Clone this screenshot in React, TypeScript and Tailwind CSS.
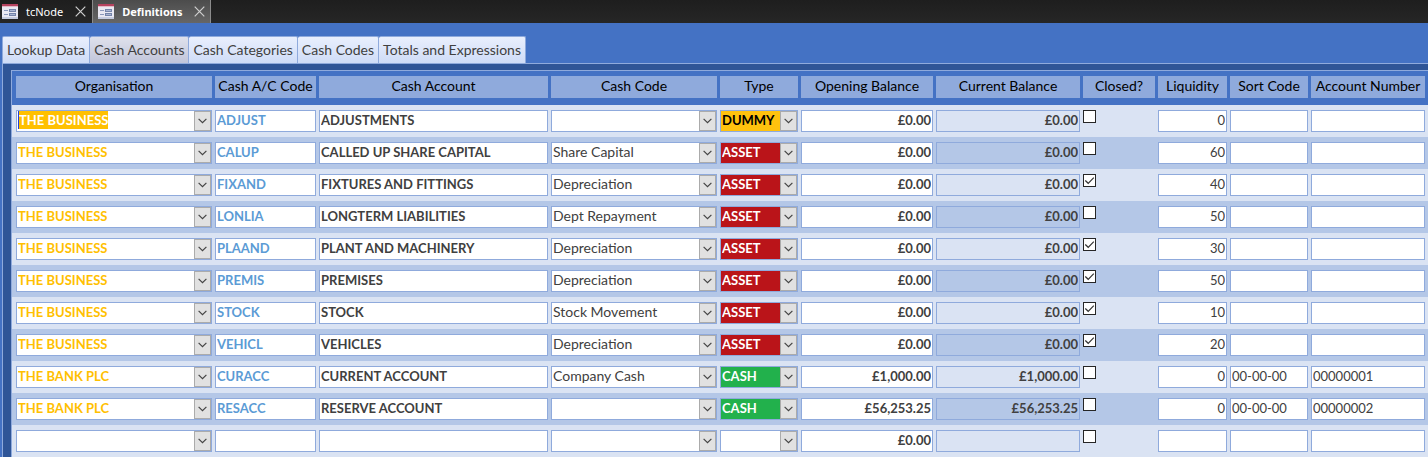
import { useState } from "react";

type AccountType = "DUMMY" | "ASSET" | "CASH" | "";

interface Account {
  organisation: string;
  code: string;
  name: string;
  cashCode: string;
  type: AccountType;
  opening: string;
  current: string;
  closed: boolean;
  liquidity: string;
  sortCode: string;
  accountNumber: string;
}

const asset = (code: string, name: string, cashCode: string, closed: boolean, liquidity: string): Account => ({
  organisation: "THE BUSINESS",
  code,
  name,
  cashCode,
  type: "ASSET",
  opening: "£0.00",
  current: "£0.00",
  closed,
  liquidity,
  sortCode: "",
  accountNumber: "",
});

const accounts: Account[] = [
  { ...asset("ADJUST", "ADJUSTMENTS", "", false, "0"), type: "DUMMY" },
  asset("CALUP", "CALLED UP SHARE CAPITAL", "Share Capital", false, "60"),
  asset("FIXAND", "FIXTURES AND FITTINGS", "Depreciation", true, "40"),
  asset("LONLIA", "LONGTERM LIABILITIES", "Dept Repayment", false, "50"),
  asset("PLAAND", "PLANT AND MACHINERY", "Depreciation", true, "30"),
  asset("PREMIS", "PREMISES", "Depreciation", true, "50"),
  asset("STOCK", "STOCK", "Stock Movement", true, "10"),
  asset("VEHICL", "VEHICLES", "Depreciation", true, "20"),
  {
    organisation: "THE BANK PLC", code: "CURACC", name: "CURRENT ACCOUNT", cashCode: "Company Cash", type: "CASH",
    opening: "£1,000.00", current: "£1,000.00", closed: false, liquidity: "0", sortCode: "00-00-00", accountNumber: "00000001",
  },
  {
    organisation: "THE BANK PLC", code: "RESACC", name: "RESERVE ACCOUNT", cashCode: "", type: "CASH",
    opening: "£56,253.25", current: "£56,253.25", closed: false, liquidity: "0", sortCode: "00-00-00", accountNumber: "00000002",
  },
  {
    organisation: "", code: "", name: "", cashCode: "", type: "",
    opening: "£0.00", current: "", closed: false, liquidity: "", sortCode: "", accountNumber: "",
  },
];

const organisations = ["", "THE BUSINESS", "THE BANK PLC"];
const cashCodes = ["", "Share Capital", "Depreciation", "Dept Repayment", "Stock Movement", "Company Cash"];
const types = ["", "DUMMY", "ASSET", "CASH"];

const columns = [
  { label: "Organisation", width: "w-[203px]" },
  { label: "Cash A/C Code", width: "w-[104px]" },
  { label: "Cash Account", width: "" },
  { label: "Cash Code", width: "w-[169px]" },
  { label: "Type", width: "w-[81px]" },
  { label: "Opening Balance", width: "w-[135px]" },
  { label: "Current Balance", width: "w-[147px]" },
  { label: "Closed?", width: "w-[75px]" },
  { label: "Liquidity", width: "w-[72px]" },
  { label: "Sort Code", width: "w-[81px]" },
  { label: "Account Number", width: "w-[117px]" },
];

const typeStyles: Record<AccountType, string> = {
  DUMMY: "bg-[#ffc20e] text-black",
  ASSET: "bg-[#ba1419] text-white",
  CASH: "bg-[#22b14c] text-white",
  "": "bg-white text-[#404040]",
};

function FormIcon() {
  return (
    <svg width="16" height="15" viewBox="0 0 16 15" aria-hidden="true">
      <rect width="16" height="15" fill="#e9e8f2" />
      <rect width="16" height="2" fill="#b5425f" />
      <rect y="2" width="16" height="1" fill="#e3b9c6" />
      <rect y="13" width="16" height="2" fill="#c5cbdf" />
      <path d="M2 6.5h4M2 10.5h4" stroke="#8a97ba" strokeWidth="1" />
      <rect x="7.5" y="5.5" width="6" height="2" fill="#a9b5d3" stroke="#7584aa" />
      <rect x="7.5" y="9.5" width="6" height="2" fill="#a9b5d3" stroke="#7584aa" />
    </svg>
  );
}

function CloseIcon() {
  return (
    <svg width="11" height="11" viewBox="0 0 11 11" aria-hidden="true">
      <path d="M.7.7l9.6 9.6M10.3.7L.7 10.3" stroke="#d0d0d0" strokeWidth="1.2" fill="none" />
    </svg>
  );
}

function DocumentTab({ title, active = false }: { title: string; active?: boolean }) {
  return (
    <div
      className={
        active
          ? "flex items-center border-x border-[#8c8c8c] bg-linear-to-b from-[#4c4c4c] to-[#666666] pr-[5px] pl-[5px] font-bold"
          : "flex items-center pr-[6px] pl-[2px]"
      }
    >
      <button type="button" className="flex items-center gap-2 whitespace-nowrap">
        <FormIcon />
        {title}
      </button>
      <button type="button" aria-label={`Close ${title}`} className="ml-3">
        <CloseIcon />
      </button>
    </div>
  );
}

function Combo({ label, options, value, tone, highlighted = false }: {
  label: string; options: string[]; value: string; tone: string; highlighted?: boolean;
}) {
  return (
    <div className={`relative flex h-[22px] items-start border border-[#8faadc] pl-px ${tone}`}>
      <select
        aria-label={label}
        defaultValue={value}
        className={
          highlighted
            ? "field-sizing-content h-[18px] appearance-none border-l border-[#2040e0] bg-[#ffc000] text-white outline-none"
            : "h-[18px] w-full appearance-none bg-transparent outline-none"
        }
      >
        {options.map((o) => (
          <option key={o} value={o}>{o}</option>
        ))}
      </select>
      <span className="pointer-events-none absolute top-0 right-0 flex h-5 w-[17px] items-center justify-center border border-[#ababab] bg-[#e1e1e1]">
        <svg width="9" height="6" viewBox="0 0 9 6" aria-hidden="true">
          <path d="M.6.8l3.9 3.9L8.4.8" fill="none" stroke="#444" strokeWidth="1.2" />
        </svg>
      </span>
    </div>
  );
}

function Field({ label, value, tone = "bg-white text-[13px] text-[#404040]", readOnly = false }: {
  label: string; value: string; tone?: string; readOnly?: boolean;
}) {
  return (
    <input
      type="text"
      aria-label={label}
      defaultValue={value}
      readOnly={readOnly}
      className={`block h-[22px] w-full border border-[#8faadc] px-px pb-[2px] leading-4 outline-none ${tone}`}
    />
  );
}

function AccountRow({ account: a, current }: { account: Account; current: boolean }) {
  const cell = "py-[5px] pr-[3px] align-top";
  return (
    <tr className="odd:bg-[#dae3f3] even:bg-[#b4c7e7]">
      <td className={`${cell} pl-1`}>
        <Combo label="Organisation" options={organisations} value={a.organisation} tone="bg-white text-[13px] font-bold text-[#ffc000]" highlighted={current} />
      </td>
      <td className={cell}><Field label="Cash A/C Code" value={a.code} tone="bg-white text-[13px] font-bold text-[#5b9bd5]" /></td>
      <td className={cell}><Field label="Cash Account" value={a.name} tone="bg-white text-[13px] font-bold text-[#404040]" /></td>
      <td className={cell}><Combo label="Cash Code" options={cashCodes} value={a.cashCode} tone="bg-white text-[#404040]" /></td>
      <td className={cell}><Combo label="Type" options={types} value={a.type} tone={`text-[13px] font-bold ${typeStyles[a.type]}`} /></td>
      <td className={cell}><Field label="Opening Balance" value={a.opening} tone="bg-white text-right text-[13px] font-bold text-[#404040]" /></td>
      <td className={cell}><Field label="Current Balance" value={a.current} tone="bg-transparent text-right text-[13px] font-bold text-[#404040]" readOnly /></td>
      <td className={cell}>
        <label className="relative flex size-[13px]">
          <input type="checkbox" aria-label="Closed?" defaultChecked={a.closed} className="peer size-[13px] appearance-none border border-[#262626] bg-white" />
          <svg width="13" height="13" viewBox="0 0 13 13" aria-hidden="true" className="pointer-events-none invisible absolute inset-0 peer-checked:visible">
            <path d="M2.3 6.5l2.9 2.8 5.6-5.7" fill="none" stroke="#333" strokeWidth="1.2" />
          </svg>
        </label>
      </td>
      <td className={cell}><Field label="Liquidity" value={a.liquidity} tone="bg-white text-right text-[13px] text-[#404040]" /></td>
      <td className={cell}><Field label="Sort Code" value={a.sortCode} /></td>
      <td className={cell}><Field label="Account Number" value={a.accountNumber} /></td>
    </tr>
  );
}

export default function App() {
  const pages = ["Lookup Data", "Cash Accounts", "Cash Categories", "Cash Codes", "Totals and Expressions"];
  const [page, setPage] = useState("Cash Accounts");

  return (
    <div className="flex min-h-screen flex-col bg-[#4472c4] font-['Lato',sans-serif] text-[14px] leading-[18px]">
      <header className="flex h-[23px] bg-linear-to-b from-[#1e1e1e] to-[#262626] font-['Noto_Sans',sans-serif] text-[11px] text-white">
        <DocumentTab title="tcNode" />
        <DocumentTab title="Definitions" active />
      </header>

      <nav className="flex pt-[13px] pl-[2px]">
        {pages.map((p) => (
          <button
            key={p}
            type="button"
            onClick={() => setPage(p)}
            className={`h-[27px] rounded-t-[2px] border-t border-r border-[#8faadc] px-1 whitespace-nowrap text-[#404040] first:border-l ${
              p === page ? "bg-linear-to-b from-[#dfe1ec] to-[#c1c5da]" : "bg-linear-to-b from-[#e9effd] to-[#cfdcf7]"
            }`}
          >
            {p}
          </button>
        ))}
      </nav>

      <main className="ml-[2px] flex grow flex-col border-t border-l border-[#8faadc] bg-[#2f5597] pt-[6px] pl-2">
        <div className="grow overflow-x-auto border-t border-l border-[#8faadc] bg-[#4472c4]">
          <table className="w-full min-w-[1350px] table-fixed border-collapse">
            <thead>
              <tr>
                {columns.map((c) => (
                  <th key={c.label} scope="col" className={`pt-[5px] pr-[3px] pb-[7px] font-normal text-black first:pl-1 ${c.width}`}>
                    <div className="h-[22px] bg-[#8faadc] pt-px whitespace-nowrap">{c.label}</div>
                  </th>
                ))}
              </tr>
            </thead>
            <tbody>
              {accounts.map((a, i) => (
                <AccountRow key={i} account={a} current={i === 0} />
              ))}
            </tbody>
          </table>
        </div>
      </main>
    </div>
  );
}
